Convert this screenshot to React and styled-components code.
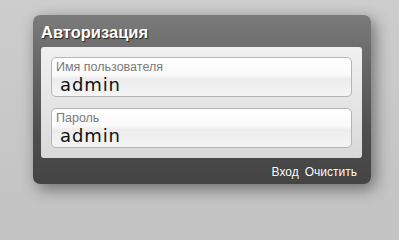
import React from "react";
import styled, { createGlobalStyle } from "styled-components";

const Global = createGlobalStyle`
  html, body {
    margin: 0;
    padding: 0;
    background: #c4c4c4;
    font-family: "Liberation Sans", Arial, sans-serif;
  }
`;

const Page = styled.div`
  width: 399px;
  height: 205px;
  padding: 15px 0 0 33px;
  box-sizing: border-box;
  background: linear-gradient(180deg, #cdcdcd 0%, #c4c4c4 100%);
`;

const Panel = styled.div`
  width: 338px;
  height: 169px;
  box-sizing: border-box;
  border-radius: 7px;
  padding: 0 9px 0 8px;
  display: flex;
  flex-direction: column;
  background: linear-gradient(180deg, #7b7b7b 0%, #6a6a6a 25%, #4e4e4e 70%, #444 100%);
  box-shadow: 4px 5px 16px rgba(0, 0, 0, 0.45);
`;

const Title = styled.h1`
  margin: 0;
  height: 32px;
  display: flex;
  align-items: center;
  padding-top: 2px;
  box-sizing: border-box;
  font-size: 16.5px;
  font-weight: bold;
  color: #fff;
  text-shadow: 1px 1px 1px #222;
`;

const Body = styled.div`
  display: flex;
  flex-direction: column;
  gap: 11px;
  padding: 10px;
  border-radius: 3px;
  background: linear-gradient(180deg, #f0f0f0 0%, #e3e3e3 60%, #d9d9d9 100%);
`;

const Field = styled.label`
  display: flex;
  flex-direction: column;
  height: 40px;
  box-sizing: border-box;
  padding: 2px 0 0 4px;
  border: 1px solid #b5b5b5;
  border-radius: 5px;
  background: linear-gradient(180deg, #ffffff 0%, #fafafa 45%, #ececec 55%, #f5f5f5 100%);
`;

const Caption = styled.span`
  font-size: 12.5px;
  line-height: 14px;
  color: #7a7a7a;
`;

const Value = styled.span`
  padding-left: 4px;
  font-family: "DejaVu Sans", sans-serif;
  font-size: 18px;
  line-height: 21px;
  letter-spacing: 0.9px;
  color: #111;
`;

const Footer = styled.div`
  flex: 1;
  display: flex;
  justify-content: flex-end;
  align-items: center;
  gap: 6px;
  padding: 2px 5px 0 0;
`;

const Link = styled.a`
  font-size: 12px;
  color: #fff;
  text-decoration: none;
  text-shadow: 0 0 1px #333;
  cursor: pointer;
`;

export default function App() {
  return (
    <>
      <Global />
      <Page>
        <Panel>
          <Title>Авторизация</Title>
          <Body>
            <Field>
              <Caption>Имя пользователя</Caption>
              <Value>admin</Value>
            </Field>
            <Field>
              <Caption>Пароль</Caption>
              <Value>admin</Value>
            </Field>
          </Body>
          <Footer>
            <Link>Вход</Link>
            <Link>Очистить</Link>
          </Footer>
        </Panel>
      </Page>
    </>
  );
}
